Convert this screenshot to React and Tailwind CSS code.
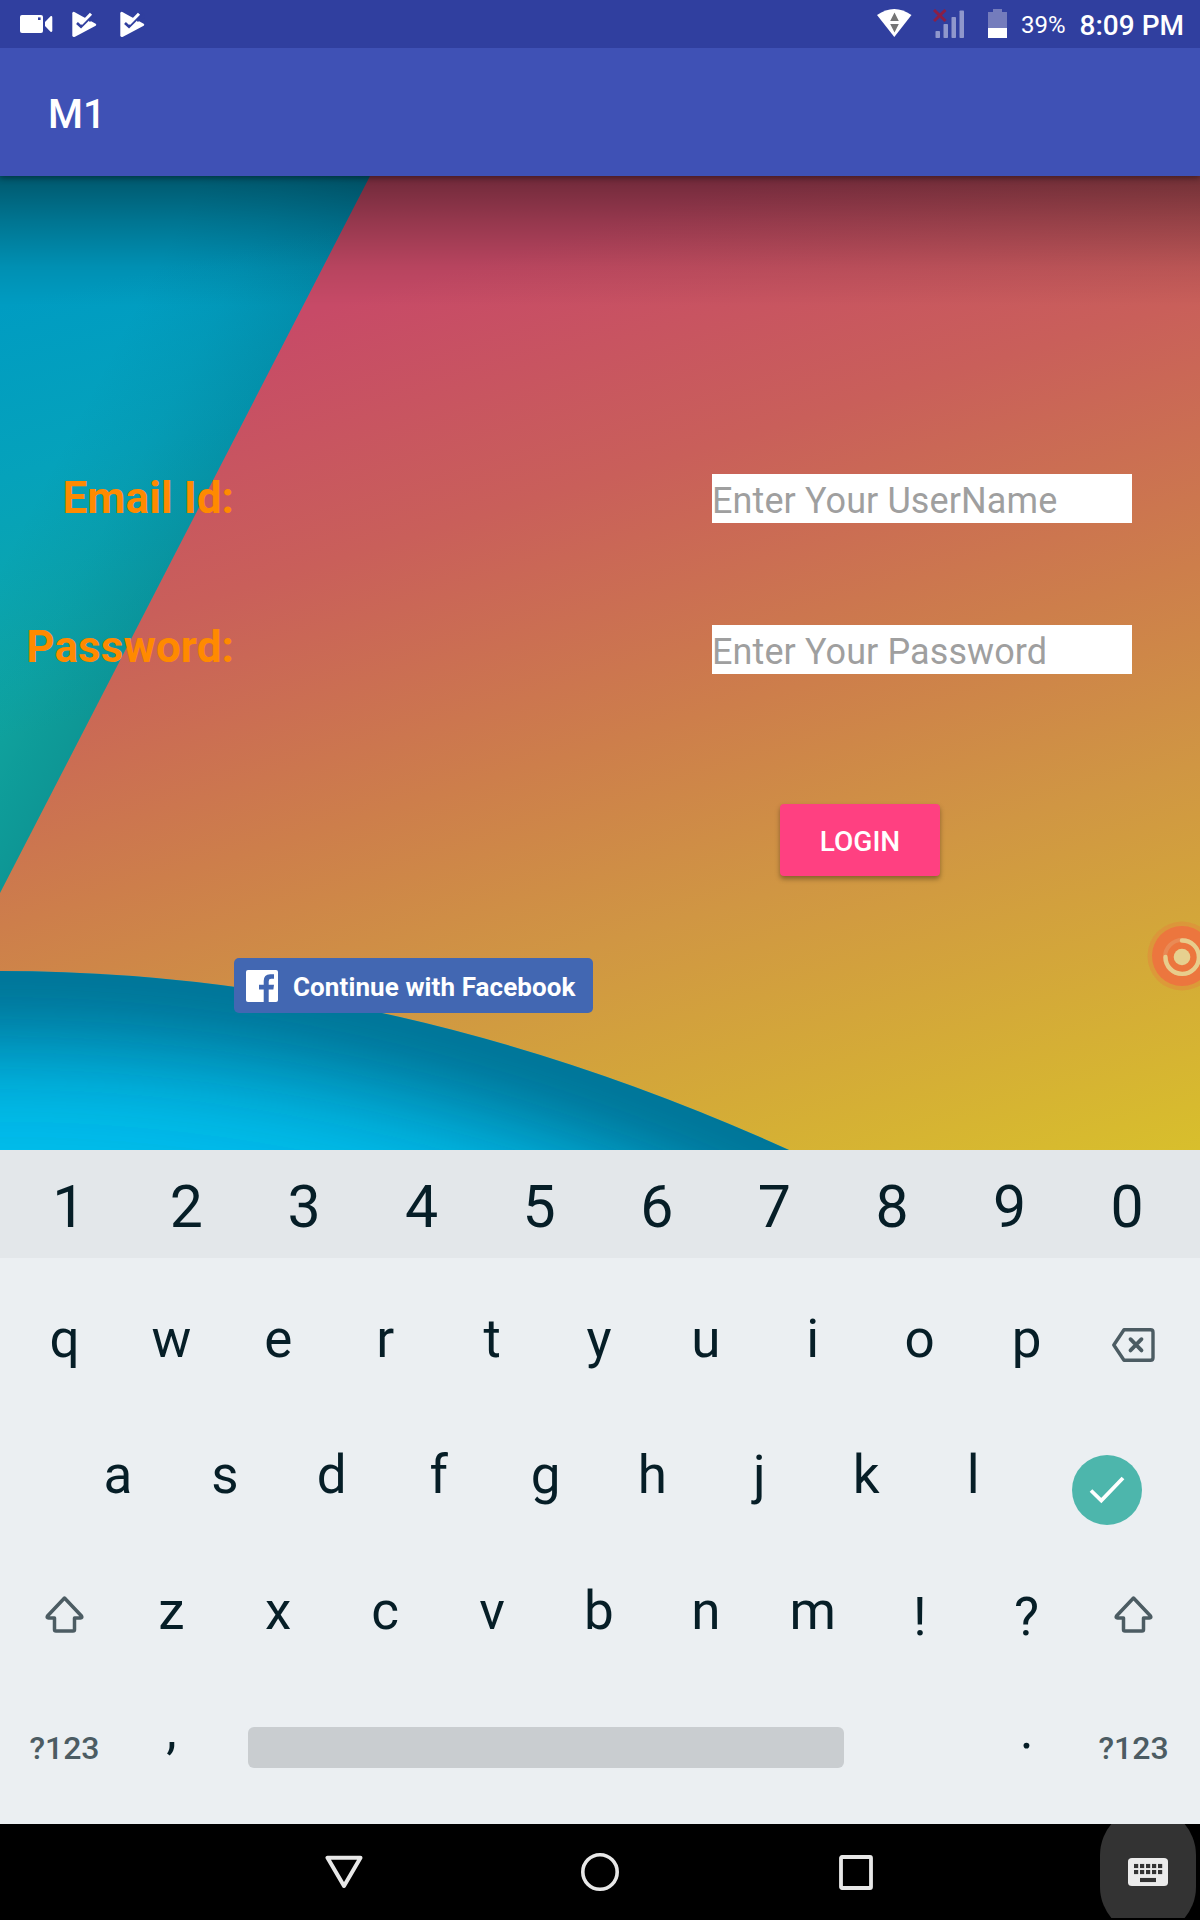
import React from "react";

const VideoIcon = () => (
  <svg className="h-[18px] w-[33px]" viewBox="0 0 33 18">
    <rect x="0" y="0" width="23" height="18" rx="2" fill="#fff" />
    <rect x="18" y="2.4" width="2.6" height="2.6" fill="#303f9f" />
    <path d="M25 7 L30.5 1.2 Q32.3 .6 32.3 2.4 V15.6 Q32.3 17.4 30.5 16.8 L25 11 Z" fill="#fff" />
  </svg>
);

const PlayCheckIcon = () => (
  <svg className="h-[28px] w-[26px]" viewBox="0 0 78 84">
    <path d="M4 10 Q4 4 10 6 L74 41 Q78 44 74 47 L12 80 Q4 83 4 76 Z" fill="#fff" />
    <path d="M44 12 L62 2 L82 20 L56 36 Z" fill="#303f9f" />
    <path d="M18 39 L30 50 L68 12" fill="none" stroke="#303f9f" strokeWidth="8" />
    <path d="M29 37 L33 39 L60 11" fill="none" stroke="#fff" strokeWidth="9" />
  </svg>
);

const WifiIcon = () => (
  <svg className="h-[28px] w-[35px]" viewBox="0 0 35 28">
    <path d="M0 6 Q17.3 -6 34.5 6 L17.3 28 Z" fill="#fff" />
    <path d="M17.5 3.5 L21.8 12 H13.2 Z M13.2 15 H21.8 L17.5 23.5 Z" fill="#757575" />
  </svg>
);

const SignalIcon = () => (
  <svg className="h-[30px] w-[32px]" viewBox="0 0 32 30">
    <g fill="#8f97cc">
      <rect x="2.5" y="22" width="4.5" height="7" rx=".8" />
      <rect x="10.5" y="15" width="4.5" height="14" rx=".8" />
      <rect x="18.5" y="8" width="4.5" height="21" rx=".8" />
      <rect x="26.5" y="1.5" width="4.5" height="27.500" rx=".8" />
    </g>
    <path d="M1 1 L12.500 12 M12.500 1 L1 12" stroke="#8a1f46" strokeWidth="3" />
  </svg>
);

const BatteryIcon = () => (
  <svg className="h-[29px] w-[19px]" viewBox="0 0 19 29">
    <path d="M0 3 H5 V0 H14 V3 H19 V19 H0 Z" fill="#747cbc" />
    <rect y="19" width="19" height="10" fill="#fff" />
  </svg>
);

const Wallpaper = () => (
  <svg className="absolute inset-0 h-full w-full" viewBox="0 176 1200 974" preserveAspectRatio="none">
    <defs>
      <linearGradient id="warm" gradientUnits="userSpaceOnUse" x1="350" y1="300" x2="657" y2="1315">
        <stop offset="0" stopColor="#c74a67" />
        <stop offset="0.23" stopColor="#c95f5a" />
        <stop offset="0.47" stopColor="#cd7e4b" />
        <stop offset="0.65" stopColor="#d09643" />
        <stop offset="1" stopColor="#d8bf2c" />
      </linearGradient>
      <linearGradient id="teal" gradientUnits="userSpaceOnUse" x1="60" y1="290" x2="160" y2="700">
        <stop offset="0" stopColor="#009cc2" />
        <stop offset="0.4" stopColor="#05a2bb" />
        <stop offset="1" stopColor="#10a8a2" />
      </linearGradient>
      <linearGradient id="fold" gradientUnits="userSpaceOnUse" x1="185" y1="534" x2="52" y2="465">
        <stop offset="0" stopColor="#003a50" stopOpacity="0.16" />
        <stop offset="0.5" stopColor="#003a50" stopOpacity="0.06" />
        <stop offset="1" stopColor="#003a50" stopOpacity="0" />
      </linearGradient>
      <linearGradient id="topShade" x1="0" y1="0" x2="0" y2="1">
        <stop offset="0" stopColor="#000" stopOpacity="0.44" />
        <stop offset="0.35" stopColor="#000" stopOpacity="0.25" />
        <stop offset="0.7" stopColor="#000" stopOpacity="0.08" />
        <stop offset="1" stopColor="#000" stopOpacity="0" />
      </linearGradient>
      <filter id="soft" filterUnits="userSpaceOnUse" x="-1200" y="600" width="2600" height="900">
        <feGaussianBlur stdDeviation="56" />
      </filter>
      <clipPath id="hill">
        <path d="M-1000 1258.500 Q0 683.500 1000 1258.500 Z" />
      </clipPath>
    </defs>
    <rect y="176" width="1200" height="974" fill="url(#warm)" />
    <path d="M0 176 H370 L0 893 Z" fill="url(#teal)" />
    <path d="M0 176 H370 L0 893 Z" fill="url(#fold)" />
    <rect y="176" width="1200" height="130" fill="url(#topShade)" />
    <g clipPath="url(#hill)">
      <rect y="960" width="1200" height="200" fill="#00bdec" />
      <path
        d="M-1000 1258.500 Q0 683.500 1000 1258.500"
        fill="none"
        stroke="#004058"
        strokeWidth="130"
        strokeOpacity="0.72"
        filter="url(#soft)"
      />
    </g>
  </svg>
);

const FacebookIcon = () => (
  <svg className="h-8 w-8" viewBox="0 0 32 32">
    <rect width="32" height="32" rx="2" fill="#fff" />
    <path
      d="M17.700 32 V19.500 H13 V14.700 H17.700 V11 Q17.700 4.500 24.200 4.300 H28 V8.800 H25.200 Q22.700 8.800 22.700 11.200 V14.700 H28 L27.400 19.500 H22.700 V32 Z"
      fill="#4267b2"
    />
  </svg>
);

const BackspaceIcon = () => (
  <svg className="mt-[11px] h-[34px] w-[43px]" viewBox="0 0 43 34" fill="none" stroke="#4c5c63" strokeWidth="3.4">
    <path d="M12 1.700 H38.500 Q41 1.700 41 4.200 V29.800 Q41 32.300 38.500 32.300 H12 L1.800 17 Z" strokeLinejoin="round" />
    <path d="M18.500 11.200 L29.500 22.400 M29.500 11.200 L18.500 22.400" strokeWidth="3.800" strokeLinecap="round" />
  </svg>
);

const ShiftIcon = () => (
  <svg className="mt-[6px] h-[37px] w-[39px]" viewBox="0 0 39 37" fill="none" stroke="#4c5c63" strokeWidth="3.5">
    <path
      d="M19.500 2 L36.500 20 Q37.500 22 35.500 22 H29.500 V33.500 Q29.500 35 28 35 H11 Q9.500 35 9.500 33.500 V22 H3.500 Q1.500 22 2.500 20 Z"
      strokeLinejoin="round"
    />
  </svg>
);

const EnterKey = () => (
  <span className="mt-[30px] flex h-[70px] w-[70px] items-center justify-center rounded-full bg-[#4db6ac]">
    <svg className="h-[28px] w-[36px]" viewBox="0 0 36 28">
      <path d="M2 14.500 L12.300 24.500 L34 2" fill="none" stroke="#fff" strokeWidth="3.800" />
    </svg>
  </span>
);

const Key = ({ children, className = "" }) => (
  <span className={"flex items-center justify-center " + className}>{children}</span>
);

function Field({ label, placeholder, labelClass }) {
  return (
    <div className="flex h-[49px] items-center">
      <label
        className={
          "w-[234px] text-right text-[44px] font-bold leading-[49px] tracking-[0.1px] text-[#ff8a00] " + labelClass
        }
      >
        {label}
      </label>
      <div className="ml-[478px] h-[49px] w-[420px] whitespace-nowrap bg-white pt-[5px] text-[36px] leading-[45px] tracking-[0.1px] text-[#9f9f9f]">
        {placeholder}
      </div>
    </div>
  );
}

export default function App() {
  return (
    <div className="flex h-[1920px] w-[1200px] flex-col overflow-hidden bg-black font-['Roboto',sans-serif]">
      <header className="relative z-10 shadow-[0_2px_6px_rgba(0,0,0,0.4)]">
        <div className="flex h-12 items-center justify-between bg-[#303f9f] pl-5 pr-[16px] text-white">
          <div className="flex items-center">
            <VideoIcon />
            <div className="ml-[18px] flex gap-[22px]">
              <PlayCheckIcon />
              <PlayCheckIcon />
            </div>
          </div>
          <div className="flex items-center">
            <span className="mb-[3px] flex"><WifiIcon /></span>
            <span className="ml-[21px] flex"><SignalIcon /></span>
            <span className="ml-[23px] mb-px flex"><BatteryIcon /></span>
            <span className="ml-[14px] pt-[2px] text-[24px] leading-none">39%</span>
            <span className="ml-[14px] pt-[3px] text-[28px] font-medium leading-none">8:09 PM</span>
          </div>
        </div>
        <div className="flex h-[128px] items-center bg-[#3f51b5] pl-12 pt-[5px] text-[40px] font-medium text-white">M1</div>
      </header>

      <main className="relative flex h-[974px] shrink-0 flex-col">
        <Wallpaper />
        <div className="relative flex flex-col pt-[298px]">
          <div className="flex flex-col gap-[102px]">
            <Field label="Email Id:" placeholder="Enter Your UserName" labelClass="" />
            <Field label="Password:" placeholder="Enter Your Password" labelClass="pb-[4px]" />
          </div>
          <button className="ml-[780px] mt-[130px] h-[72px] w-[160px] rounded-[4px] bg-[#ff4081] pt-[3px] text-[28px] font-medium text-white shadow-[0_3px_5px_rgba(0,0,0,0.35)]">
            LOGIN
          </button>
          <button className="ml-[234px] mt-[82px] flex h-[55px] w-[359px] items-center rounded-[5px] bg-[#4267b2] pl-[12px] text-white">
            <FacebookIcon />
            <span className="ml-[15px] whitespace-nowrap pt-[3px] text-[26px] font-bold leading-none tracking-[0.09px]">Continue with Facebook</span>
          </button>
        </div>
        <div className="absolute right-0 top-[745px] h-[70px] w-[53px] overflow-hidden">
          <svg className="h-[70px] w-[70px]" viewBox="0 0 70 70">
            <circle cx="35" cy="35" r="34.500" fill="#e8813c" fillOpacity="0.42" />
            <circle cx="35" cy="35" r="30" fill="#ec763e" />
            <circle cx="35" cy="36" r="17" fill="none" stroke="#e98a55" strokeWidth="4" />
            <path d="M35 19.500 A16.700 16.700 0 1 1 18.500 36" fill="none" stroke="#e8cd8c" strokeWidth="4.400" strokeLinecap="round" />
            <circle cx="35" cy="36" r="8.300" fill="#e6d08f" />
          </svg>
        </div>
      </main>

      <section className="h-[674px] shrink-0 bg-[#ebeff2] text-[53px] leading-none text-[#061e27]">
        <div className="grid h-[108px] grid-cols-10 bg-[#e3e7ea] pl-[10px] pr-[14px] pt-[5px] text-[59px]">
          {[..."1234567890"].map((d) => (
            <Key key={d}>{d}</Key>
          ))}
        </div>
        <div className="pl-[11px] pr-[13px] pt-[13px]">
          <div className="grid h-[136px] grid-cols-11">
            {[..."qwertyuiop"].map((c) => (
              <Key key={c}>{c}</Key>
            ))}
            <Key><BackspaceIcon /></Key>
          </div>
          <div className="grid h-[136px] grid-cols-22">
            <span />
            {[..."asdfghjkl"].map((c) => (
              <Key key={c} className="col-span-2">{c}</Key>
            ))}
            <Key className="col-span-3"><EnterKey /></Key>
          </div>
          <div className="grid h-[136px] grid-cols-11">
            <Key><ShiftIcon /></Key>
            {[..."zxcvbnm"].map((c) => (
              <Key key={c}>{c}</Key>
            ))}
            <Key className="pt-[12px]">!</Key>
            <Key className="pt-[12px]">?</Key>
            <Key><ShiftIcon /></Key>
          </div>
          <div className="grid h-[136px] grid-cols-11">
            <Key className="pt-px text-[32px] font-medium text-[#4c5c63]">?123</Key>
            <Key className="pb-[33px]">,</Key>
            <div className="col-span-7 flex items-center pl-[23px]">
              <span className="h-[41px] w-[596px] rounded-[6px] bg-[#c9cdd0]" />
            </div>
            <Key className="pb-[33px]">.</Key>
            <Key className="pt-px text-[32px] font-medium text-[#4c5c63]">?123</Key>
          </div>
        </div>
      </section>

      <nav className="flex h-24 shrink-0 items-center bg-black">
        <svg className="ml-[325px] h-[34px] w-[38px]" viewBox="0 0 38 34" fill="none" stroke="#e8e8e8" strokeWidth="4">
          <path d="M2.500 2.700 H35.500 L19 31 Z" strokeLinejoin="round" />
        </svg>
        <svg className="ml-[218px] h-[38px] w-[38px]" viewBox="0 0 38 38">
          <circle cx="19" cy="19" r="17.200" fill="none" stroke="#e8e8e8" strokeWidth="3.600" />
        </svg>
        <svg className="ml-[220px] h-[35px] w-[34px]" viewBox="0 0 34 35">
          <rect x="2" y="2" width="30" height="31" rx="1" fill="none" stroke="#e8e8e8" strokeWidth="3.800" />
        </svg>
        <div className="ml-[227px] flex h-[94px] w-24 items-center justify-center self-start overflow-hidden">
          <div className="flex h-[128px] w-24 shrink-0 items-center justify-center rounded-[48px] bg-[#333]">
            <svg className="mt-[2px] h-[28px] w-10" viewBox="0 0 40 32" preserveAspectRatio="none">
              <rect width="40" height="32" rx="4" fill="#ebebeb" />
              <g fill="#333">
                {[6, 12, 18, 24, 30].map((x) => (
                  <React.Fragment key={x}>
                    <rect x={x} y="6.800" width="4.200" height="4.700" />
                    <rect x={x} y="13.700" width="4.200" height="4.700" />
                  </React.Fragment>
                ))}
                <rect x="12" y="22.800" width="16" height="4.700" />
              </g>
            </svg>
          </div>
        </div>
      </nav>
    </div>
  );
}
